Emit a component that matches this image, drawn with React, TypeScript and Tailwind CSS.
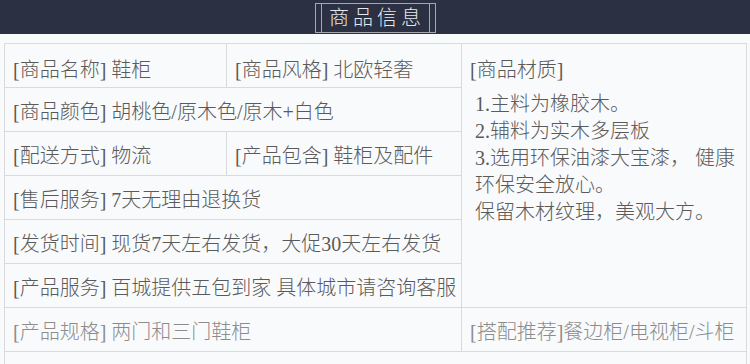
const font = { fontFamily: '"Liberation Serif", "Noto Sans CJK SC", serif' };

const materials = [
  "1.主料为橡胶木。",
  "2.辅料为实木多层板",
  "3.选用环保油漆大宝漆， 健康",
  "环保安全放心。",
  "保留木材纹理，美观大方。",
];

function Cell({
  children,
  colSpan,
  muted,
  first,
}: {
  children?: React.ReactNode;
  colSpan?: number;
  muted?: boolean;
  first?: boolean;
}) {
  return (
    <td
      colSpan={colSpan}
      className={`h-[44px] border border-[#d9dadd] px-2 align-middle whitespace-nowrap ${
        first ? "pt-[9px]" : "pt-[6px]"
      } ${muted ? "text-[#8c8c8c]" : "text-[#5a5a5a]"}`}
    >
      {children}
    </td>
  );
}

export default function App() {
  return (
    <div className="min-h-screen bg-[#f9fafc] font-light" style={font}>
      {/* Header */}
      <div className="h-[34px] bg-[#2b3043] flex justify-center pt-[3px]">
        <div className="relative h-[30px] w-[121px] border border-[#a4a7b0] flex items-center justify-center">
          <div className="absolute left-[5px] top-0 bottom-0 border-l border-[#a4a7b0]" />
          <div className="absolute right-[5px] top-0 bottom-0 border-l border-[#a4a7b0]" />
          <span className="text-[20px] leading-none tracking-[4px] text-[#e6e7ea] pl-[4px]">商品信息</span>
        </div>
      </div>

      {/* Table */}
      <div className="pt-[9px] px-[4px]">
        <table className="w-[742px] border-collapse table-fixed text-[20px] leading-[27px]">
          <colgroup>
            <col className="w-[222px]" />
            <col className="w-[235px]" />
            <col className="w-[285px]" />
          </colgroup>
          <tbody>
            <tr>
              <Cell first>[商品名称] 鞋柜</Cell>
              <Cell first>[商品风格] 北欧轻奢</Cell>
              <td rowSpan={6} className="border border-[#d9dadd] align-top px-2 pt-[12px] text-[#5a5a5a]">
                <div className="leading-[28px]">[商品材质]</div>
                <div className="mt-[7px] pl-[5px]">
                  {materials.map((m) => (
                    <div key={m} className="whitespace-nowrap">
                      {m}
                    </div>
                  ))}
                </div>
              </td>
            </tr>
            <tr>
              <Cell colSpan={2}>[商品颜色] 胡桃色/原木色/原木+白色</Cell>
            </tr>
            <tr>
              <Cell>[配送方式] 物流</Cell>
              <Cell>[产品包含] 鞋柜及配件</Cell>
            </tr>
            <tr>
              <Cell colSpan={2}>[售后服务] 7天无理由退换货</Cell>
            </tr>
            <tr>
              <Cell colSpan={2}>[发货时间] 现货7天左右发货，大促30天左右发货</Cell>
            </tr>
            <tr>
              <Cell colSpan={2}>[产品服务] 百城提供五包到家 具体城市请咨询客服</Cell>
            </tr>
            <tr>
              <Cell colSpan={2} muted>
                [产品规格] 两门和三门鞋柜
              </Cell>
              <Cell muted>[搭配推荐]餐边柜/电视柜/斗柜</Cell>
            </tr>
            <tr>
              <Cell colSpan={3} />
            </tr>
          </tbody>
        </table>
      </div>
    </div>
  );
}
